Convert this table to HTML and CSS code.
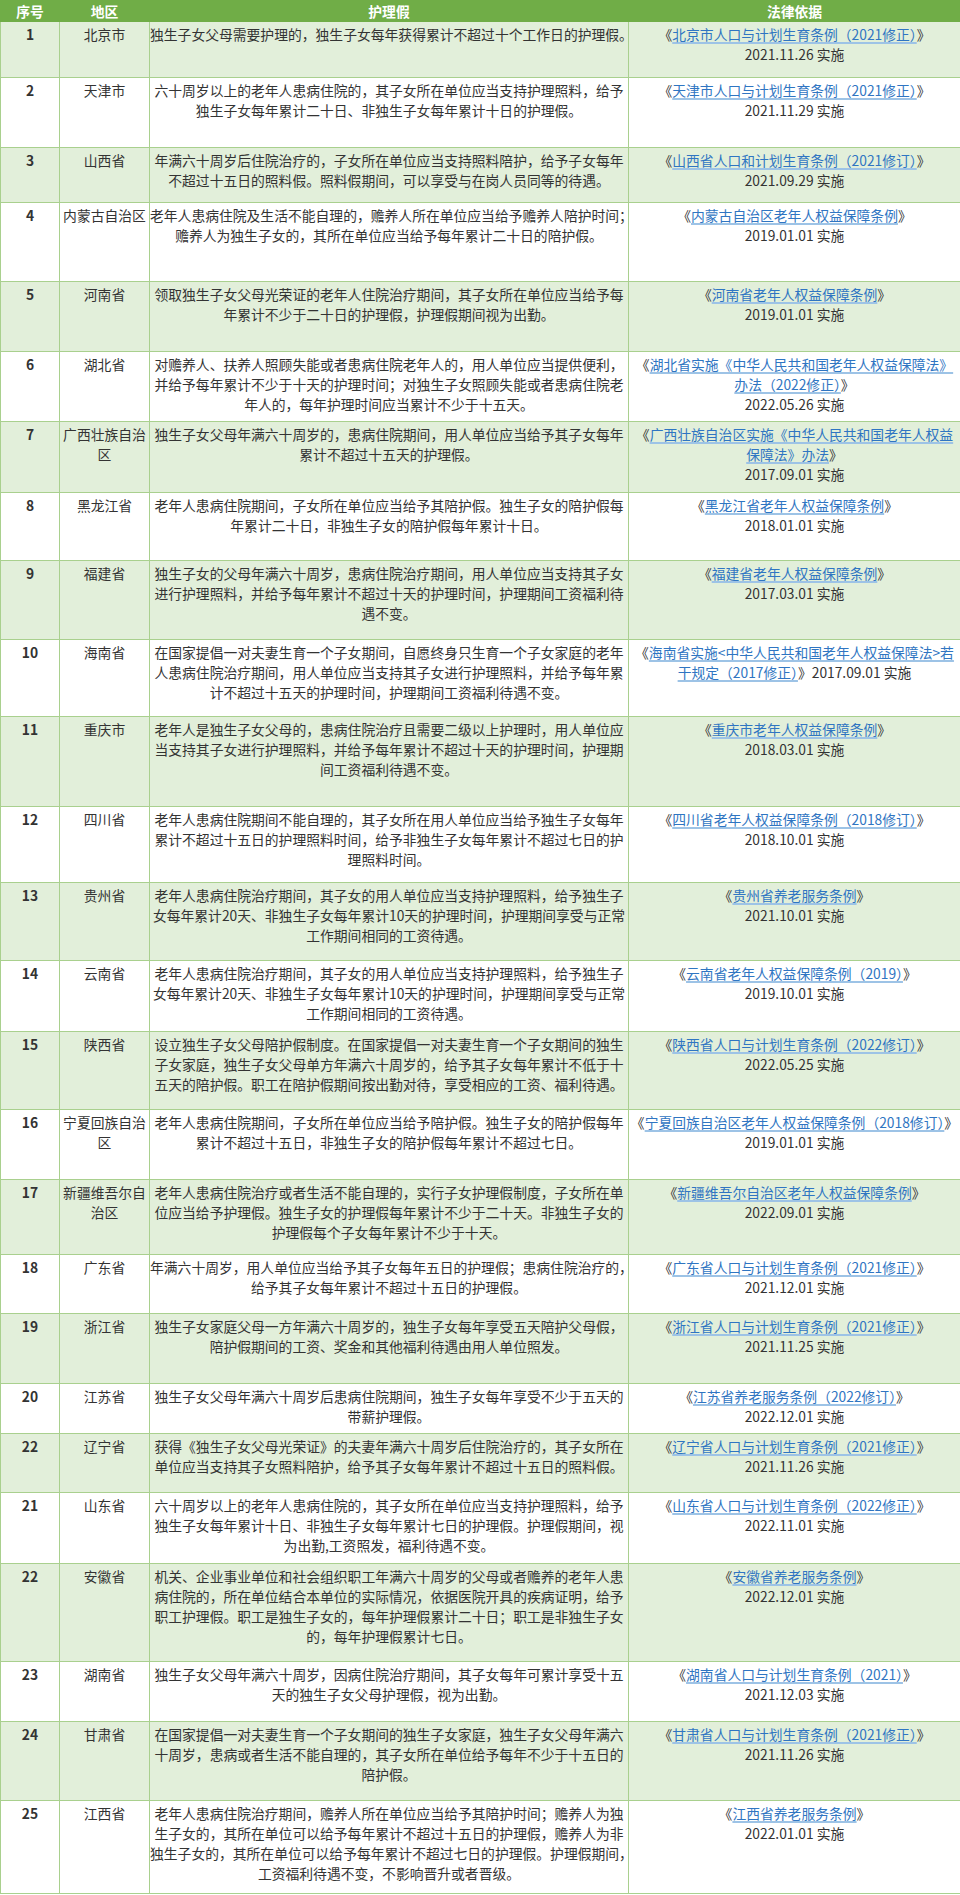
FILE: index.html
```html
<!DOCTYPE html>
<html lang="zh-CN">
<head>
<meta charset="utf-8">
<title>各地护理假规定</title>
<link rel="stylesheet" href="styles.css">
</head>
<body>
<table class="leave">
  <colgroup>
    <col class="c-no">
    <col class="c-area">
    <col class="c-text">
    <col class="c-law">
  </colgroup>
  <thead>
    <tr class="h21">
      <th>序号</th><th>地区</th><th>护理假</th><th>法律依据</th>
    </tr>
  </thead>
  <tbody>
    <tr class="h56">
      <td class="no">1</td><td class="area">北京市</td>
      <td class="text">独生子女父母需要护理的，独生子女每年获得累计不超过十个工作日的护理假。</td>
      <td class="law">《<a href="#">北京市人口与计划生育条例（2021修正）</a>》<br>2021.11.26 实施</td>
    </tr>
    <tr class="h70">
      <td class="no">2</td><td class="area">天津市</td>
      <td class="text">六十周岁以上的老年人患病住院的，其子女所在单位应当支持护理照料，给予<br>独生子女每年累计二十日、非独生子女每年累计十日的护理假。</td>
      <td class="law">《<a href="#">天津市人口与计划生育条例（2021修正）</a>》<br>2021.11.29 实施</td>
    </tr>
    <tr class="h55">
      <td class="no">3</td><td class="area">山西省</td>
      <td class="text">年满六十周岁后住院治疗的，子女所在单位应当支持照料陪护，给予子女每年<br>不超过十五日的照料假。照料假期间，可以享受与在岗人员同等的待遇。</td>
      <td class="law">《<a href="#">山西省人口和计划生育条例（2021修订）</a>》<br>2021.09.29 实施</td>
    </tr>
    <tr class="h79">
      <td class="no">4</td><td class="area">内蒙古自治区</td>
      <td class="text">老年人患病住院及生活不能自理的，赡养人所在单位应当给予赡养人陪护时间；<br>赡养人为独生子女的，其所在单位应当给予每年累计二十日的陪护假。</td>
      <td class="law">《<a href="#">内蒙古自治区老年人权益保障条例</a>》<br>2019.01.01 实施</td>
    </tr>
    <tr class="h70">
      <td class="no">5</td><td class="area">河南省</td>
      <td class="text">领取独生子女父母光荣证的老年人住院治疗期间，其子女所在单位应当给予每<br>年累计不少于二十日的护理假，护理假期间视为出勤。</td>
      <td class="law">《<a href="#">河南省老年人权益保障条例</a>》<br>2019.01.01 实施</td>
    </tr>
    <tr class="h70">
      <td class="no">6</td><td class="area">湖北省</td>
      <td class="text">对赡养人、扶养人照顾失能或者患病住院老年人的，用人单位应当提供便利，<br>并给予每年累计不少于十天的护理时间；对独生子女照顾失能或者患病住院老<br>年人的，每年护理时间应当累计不少于十五天。</td>
      <td class="law">《<a href="#">湖北省实施《中华人民共和国老年人权益保障法》<br>办法（2022修正）</a>》<br>2022.05.26 实施</td>
    </tr>
    <tr class="h71">
      <td class="no">7</td><td class="area">广西壮族自治区</td>
      <td class="text">独生子女父母年满六十周岁的，患病住院期间，用人单位应当给予其子女每年<br>累计不超过十五天的护理假。</td>
      <td class="law">《<a href="#">广西壮族自治区实施《中华人民共和国老年人权益<br>保障法》办法</a>》<br>2017.09.01 实施</td>
    </tr>
    <tr class="h68">
      <td class="no">8</td><td class="area">黑龙江省</td>
      <td class="text">老年人患病住院期间，子女所在单位应当给予其陪护假。独生子女的陪护假每<br>年累计二十日，非独生子女的陪护假每年累计十日。</td>
      <td class="law">《<a href="#">黑龙江省老年人权益保障条例</a>》<br>2018.01.01 实施</td>
    </tr>
    <tr class="h79">
      <td class="no">9</td><td class="area">福建省</td>
      <td class="text">独生子女的父母年满六十周岁，患病住院治疗期间，用人单位应当支持其子女<br>进行护理照料，并给予每年累计不超过十天的护理时间，护理期间工资福利待<br>遇不变。</td>
      <td class="law">《<a href="#">福建省老年人权益保障条例</a>》<br>2017.03.01 实施</td>
    </tr>
    <tr class="h77">
      <td class="no">10</td><td class="area">海南省</td>
      <td class="text">在国家提倡一对夫妻生育一个子女期间，自愿终身只生育一个子女家庭的老年<br>人患病住院治疗期间，用人单位应当支持其子女进行护理照料，并给予每年累<br>计不超过十五天的护理时间，护理期间工资福利待遇不变。</td>
      <td class="law">《<a href="#">海南省实施&lt;中华人民共和国老年人权益保障法&gt;若<br>干规定（2017修正）</a>》2017.09.01 实施</td>
    </tr>
    <tr class="h90">
      <td class="no">11</td><td class="area">重庆市</td>
      <td class="text">老年人是独生子女父母的，患病住院治疗且需要二级以上护理时，用人单位应<br>当支持其子女进行护理照料，并给予每年累计不超过十天的护理时间，护理期<br>间工资福利待遇不变。</td>
      <td class="law">《<a href="#">重庆市老年人权益保障条例</a>》<br>2018.03.01 实施</td>
    </tr>
    <tr class="h76">
      <td class="no">12</td><td class="area">四川省</td>
      <td class="text">老年人患病住院期间不能自理的，其子女所在用人单位应当给予独生子女每年<br>累计不超过十五日的护理照料时间，给予非独生子女每年累计不超过七日的护<br>理照料时间。</td>
      <td class="law">《<a href="#">四川省老年人权益保障条例（2018修订）</a>》<br>2018.10.01 实施</td>
    </tr>
    <tr class="h78">
      <td class="no">13</td><td class="area">贵州省</td>
      <td class="text">老年人患病住院治疗期间，其子女的用人单位应当支持护理照料，给予独生子<br>女每年累计20天、非独生子女每年累计10天的护理时间，护理期间享受与正常<br>工作期间相同的工资待遇。</td>
      <td class="law">《<a href="#">贵州省养老服务条例</a>》<br>2021.10.01 实施</td>
    </tr>
    <tr class="h71">
      <td class="no">14</td><td class="area">云南省</td>
      <td class="text">老年人患病住院治疗期间，其子女的用人单位应当支持护理照料，给予独生子<br>女每年累计20天、非独生子女每年累计10天的护理时间，护理期间享受与正常<br>工作期间相同的工资待遇。</td>
      <td class="law">《<a href="#">云南省老年人权益保障条例（2019）</a>》<br>2019.10.01 实施</td>
    </tr>
    <tr class="h78">
      <td class="no">15</td><td class="area">陕西省</td>
      <td class="text">设立独生子女父母陪护假制度。在国家提倡一对夫妻生育一个子女期间的独生<br>子女家庭，独生子女父母单方年满六十周岁的，给予其子女每年累计不低于十<br>五天的陪护假。职工在陪护假期间按出勤对待，享受相应的工资、福利待遇。</td>
      <td class="law">《<a href="#">陕西省人口与计划生育条例（2022修订）</a>》<br>2022.05.25 实施</td>
    </tr>
    <tr class="h70">
      <td class="no">16</td><td class="area">宁夏回族自治区</td>
      <td class="text">老年人患病住院期间，子女所在单位应当给予陪护假。独生子女的陪护假每年<br>累计不超过十五日，非独生子女的陪护假每年累计不超过七日。</td>
      <td class="law">《<a href="#">宁夏回族自治区老年人权益保障条例（2018修订）</a>》<br>2019.01.01 实施</td>
    </tr>
    <tr class="h75">
      <td class="no">17</td><td class="area">新疆维吾尔自治区</td>
      <td class="text">老年人患病住院治疗或者生活不能自理的，实行子女护理假制度，子女所在单<br>位应当给予护理假。独生子女的护理假每年累计不少于二十天。非独生子女的<br>护理假每个子女每年累计不少于十天。</td>
      <td class="law">《<a href="#">新疆维吾尔自治区老年人权益保障条例</a>》<br>2022.09.01 实施</td>
    </tr>
    <tr class="h59">
      <td class="no">18</td><td class="area">广东省</td>
      <td class="text">年满六十周岁，用人单位应当给予其子女每年五日的护理假；患病住院治疗的，<br>给予其子女每年累计不超过十五日的护理假。</td>
      <td class="law">《<a href="#">广东省人口与计划生育条例（2021修正）</a>》<br>2021.12.01 实施</td>
    </tr>
    <tr class="h70">
      <td class="no">19</td><td class="area">浙江省</td>
      <td class="text">独生子女家庭父母一方年满六十周岁的，独生子女每年享受五天陪护父母假，<br>陪护假期间的工资、奖金和其他福利待遇由用人单位照发。</td>
      <td class="law">《<a href="#">浙江省人口与计划生育条例（2021修正）</a>》<br>2021.11.25 实施</td>
    </tr>
    <tr class="h50">
      <td class="no">20</td><td class="area">江苏省</td>
      <td class="text">独生子女父母年满六十周岁后患病住院期间，独生子女每年享受不少于五天的<br>带薪护理假。</td>
      <td class="law">《<a href="#">江苏省养老服务条例（2022修订）</a>》<br>2022.12.01 实施</td>
    </tr>
    <tr class="h59">
      <td class="no">22</td><td class="area">辽宁省</td>
      <td class="text">获得《独生子女父母光荣证》的夫妻年满六十周岁后住院治疗的，其子女所在<br>单位应当支持其子女照料陪护，给予其子女每年累计不超过十五日的照料假。</td>
      <td class="law">《<a href="#">辽宁省人口与计划生育条例（2021修正）</a>》<br>2021.11.26 实施</td>
    </tr>
    <tr class="h71">
      <td class="no">21</td><td class="area">山东省</td>
      <td class="text">六十周岁以上的老年人患病住院的，其子女所在单位应当支持护理照料，给予<br>独生子女每年累计十日、非独生子女每年累计七日的护理假。护理假期间，视<br>为出勤,工资照发，福利待遇不变。</td>
      <td class="law">《<a href="#">山东省人口与计划生育条例（2022修正）</a>》<br>2022.11.01 实施</td>
    </tr>
    <tr class="h98">
      <td class="no">22</td><td class="area">安徽省</td>
      <td class="text">机关、企业事业单位和社会组织职工年满六十周岁的父母或者赡养的老年人患<br>病住院的，所在单位结合本单位的实际情况，依据医院开具的疾病证明，给予<br>职工护理假。职工是独生子女的，每年护理假累计二十日；职工是非独生子女<br>的，每年护理假累计七日。</td>
      <td class="law">《<a href="#">安徽省养老服务条例</a>》<br>2022.12.01 实施</td>
    </tr>
    <tr class="h60">
      <td class="no">23</td><td class="area">湖南省</td>
      <td class="text">独生子女父母年满六十周岁，因病住院治疗期间，其子女每年可累计享受十五<br>天的独生子女父母护理假，视为出勤。</td>
      <td class="law">《<a href="#">湖南省人口与计划生育条例（2021）</a>》<br>2021.12.03 实施</td>
    </tr>
    <tr class="h79">
      <td class="no">24</td><td class="area">甘肃省</td>
      <td class="text">在国家提倡一对夫妻生育一个子女期间的独生子女家庭，独生子女父母年满六<br>十周岁，患病或者生活不能自理的，其子女所在单位给予每年不少于十五日的<br>陪护假。</td>
      <td class="law">《<a href="#">甘肃省人口与计划生育条例（2021修正）</a>》<br>2021.11.26 实施</td>
    </tr>
    <tr class="h93">
      <td class="no">25</td><td class="area">江西省</td>
      <td class="text">老年人患病住院治疗期间，赡养人所在单位应当给予其陪护时间；赡养人为独<br>生子女的，其所在单位可以给予每年累计不超过十五日的护理假，赡养人为非<br>独生子女的，其所在单位可以给予每年累计不超过七日的护理假。护理假期间，<br>工资福利待遇不变，不影响晋升或者晋级。</td>
      <td class="law">《<a href="#">江西省养老服务条例</a>》<br>2022.01.01 实施</td>
    </tr>
  </tbody>
</table>
</body>
</html>
```

FILE: styles.css
```css
html, body {
  margin: 0;
  padding: 0;
  background: #ffffff;
}

body {
  font-family: "Noto Sans CJK SC", "Noto Sans", sans-serif;
  font-size: 13.8px;
  line-height: 20px;
  color: #333333;
}

.leave {
  width: 960px;
  table-layout: fixed;
  border-collapse: collapse;
}

.c-no { width: 59px; }
.c-area { width: 90px; }
.c-text { width: 479px; }
.c-law { width: 332px; }

.leave th,
.leave td {
  border: 1px solid #a9d08e;
  padding: 0;
  vertical-align: top;
  text-align: center;
}

.leave th {
  background: #70ad47;
  color: #ffffff;
  font-weight: bold;
  vertical-align: middle;
  line-height: 19px;
  border-color: #70ad47;
}

.leave td {
  padding-top: 2px;
}

.leave tbody tr:nth-child(odd) td {
  background: #e2efda;
}

.leave tbody tr:nth-child(even) td {
  background: #ffffff;
}

.no {
  font-weight: bold;
}

.area {
  padding-left: 3px;
  padding-right: 3px;
}

.text {
  white-space: nowrap;
  overflow: visible;
}

.law {
  white-space: nowrap;
}

.law a {
  color: #2f75c2;
  text-decoration: underline;
  text-decoration-color: #9dc3e6;
  text-decoration-thickness: 2px;
  text-underline-offset: 2px;
}

.h21 { height: 21px; }
.h50 { height: 50px; }
.h55 { height: 55px; }
.h56 { height: 56px; }
.h59 { height: 59px; }
.h60 { height: 60px; }
.h68 { height: 68px; }
.h70 { height: 70px; }
.h71 { height: 71px; }
.h75 { height: 75px; }
.h76 { height: 76px; }
.h77 { height: 77px; }
.h78 { height: 78px; }
.h79 { height: 79px; }
.h90 { height: 90px; }
.h93 { height: 93px; }
.h98 { height: 98px; }
```
